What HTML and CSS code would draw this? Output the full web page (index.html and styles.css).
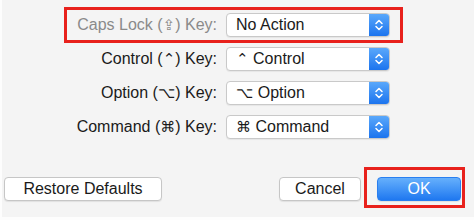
FILE: index.html
```html
<!DOCTYPE html>
<html lang="en">
<head>
    <meta charset="UTF-8">
    <meta name="viewport" content="width=device-width, initial-scale=1.0">
    <title>Modifier Keys</title>
    <link rel="stylesheet" href="styles.css">
</head>
<body>
    <div class="window">
        <div class="key-grid">
            <label class="key-label dim">Caps Lock (<span class="sym">⇪</span>) Key:</label>
            <div class="popup">
                <span class="popup-text">No Action</span>
                <span class="popup-arrows">
                    <svg width="10" height="14" viewBox="0 0 10 14"><path d="M2 5.5 L5 2.5 L8 5.5 M2 8.5 L5 11.5 L8 8.5" fill="none" stroke="#fff" stroke-width="1.5" stroke-linecap="round" stroke-linejoin="round"/></svg>
                </span>
            </div>

            <label class="key-label">Control (<span class="sym">⌃</span>) Key:</label>
            <div class="popup">
                <span class="popup-text"><span class="sym">⌃</span> Control</span>
                <span class="popup-arrows">
                    <svg width="10" height="14" viewBox="0 0 10 14"><path d="M2 5.5 L5 2.5 L8 5.5 M2 8.5 L5 11.5 L8 8.5" fill="none" stroke="#fff" stroke-width="1.5" stroke-linecap="round" stroke-linejoin="round"/></svg>
                </span>
            </div>

            <label class="key-label">Option (<span class="sym">⌥</span>) Key:</label>
            <div class="popup">
                <span class="popup-text"><span class="sym">⌥</span> Option</span>
                <span class="popup-arrows">
                    <svg width="10" height="14" viewBox="0 0 10 14"><path d="M2 5.5 L5 2.5 L8 5.5 M2 8.5 L5 11.5 L8 8.5" fill="none" stroke="#fff" stroke-width="1.5" stroke-linecap="round" stroke-linejoin="round"/></svg>
                </span>
            </div>

            <label class="key-label">Command (<span class="sym">⌘</span>) Key:</label>
            <div class="popup">
                <span class="popup-text"><span class="sym">⌘</span> Command</span>
                <span class="popup-arrows">
                    <svg width="10" height="14" viewBox="0 0 10 14"><path d="M2 5.5 L5 2.5 L8 5.5 M2 8.5 L5 11.5 L8 8.5" fill="none" stroke="#fff" stroke-width="1.5" stroke-linecap="round" stroke-linejoin="round"/></svg>
                </span>
            </div>
        </div>

        <div class="button-row">
            <button class="btn btn-restore">Restore Defaults</button>
            <button class="btn btn-cancel">Cancel</button>
            <button class="btn btn-ok">OK</button>
        </div>

        <!-- highlight boxes -->
        <div class="mark mark-caps"></div>
        <div class="mark mark-ok"></div>
    </div>
</body>
</html>
```

FILE: styles.css
```css
body {
    margin: 0;
    background: #fdfdfd;
    font-family: "Liberation Sans", Arial, sans-serif;
    color: #1a1a1a;
}

.window {
    position: relative;
    margin-left: 2px;
    height: 217px;
    background: #f4f4f4;
    overflow: hidden;
}

.key-grid {
    display: grid;
    grid-template-columns: 215px 164px;
    grid-auto-rows: 24px;
    column-gap: 9px;
    row-gap: 10px;
    padding-top: 13px;
}

.key-label {
    text-align: right;
    font-size: 16px;
    line-height: 24px;
}

.key-label.dim {
    color: #8a8a8a;
}

.sym {
    font-family: "DejaVu Sans", sans-serif;
    font-size: 15px;
}

.popup {
    display: flex;
    background: #fff;
    border: 1px solid #c9c9c9;
    border-radius: 4px;
    box-shadow: 0 1px 1px rgba(0, 0, 0, 0.06);
    overflow: hidden;
}

.popup-text {
    flex: 1;
    padding-left: 9px;
    font-size: 16px;
    line-height: 22px;
}

.popup-arrows {
    width: 20px;
    display: flex;
    align-items: center;
    justify-content: center;
    background: linear-gradient(#5aa8fb, #1c74ee);
}

.button-row {
    display: flex;
    margin-top: 38px;
    padding: 0 13px 0 2px;
}

.btn {
    height: 24px;
    font-family: "Liberation Sans", Arial, sans-serif;
    font-size: 16px;
    color: #1a1a1a;
    background: #fff;
    border: 1px solid #c6c6c6;
    border-radius: 4px;
    box-shadow: 0 1px 1px rgba(0, 0, 0, 0.08);
    padding: 0;
}

.btn-restore {
    width: 158px;
    margin-right: auto;
}

.btn-cancel {
    width: 82px;
}

.btn-ok {
    width: 84px;
    margin-left: 16px;
    color: #fff;
    border-color: #2a7ff0;
    background: linear-gradient(#66b0fc, #1f78f0);
}

/* red highlight boxes */
.mark {
    position: absolute;
    border: 3px solid #e8211c;
    box-sizing: border-box;
}

.mark-caps {
    left: 62px;
    top: 7px;
    width: 339px;
    height: 36px;
}

.mark-ok {
    left: 362px;
    top: 167px;
    width: 101px;
    height: 41px;
}
```
